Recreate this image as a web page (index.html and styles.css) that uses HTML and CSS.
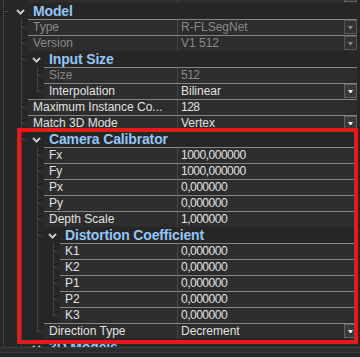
FILE: index.html
```html
<!DOCTYPE html>
<html>
<head>
<meta charset="utf-8">
<link rel="stylesheet" href="styles.css">
</head>
<body>
<div class="panel">
  <div class="list">
    <div class="row prev">
      <span class="g c1 v"></span><span class="g s"></span>
      <div class="cell"><span class="lbl"></span><span class="val"><i class="dd"></i></span></div>
    </div>

    <div class="row head">
      <span class="g c1 t"></span>
      <span class="chev"><svg width="9" height="6" viewBox="0 0 9 6"><polyline points="1,1 4.5,4.5 8,1"/></svg></span>
      <span class="htxt">Model</span>
    </div>
    <div class="row">
      <span class="g c1 v"></span><span class="g s t"></span>
      <div class="cell dis"><span class="lbl">Type</span><span class="val">R-FLSegNet<i class="dd"></i></span></div>
    </div>
    <div class="row">
      <span class="g c1 v"></span><span class="g s t"></span>
      <div class="cell dis"><span class="lbl">Version</span><span class="val">V1 512<i class="dd"></i></span></div>
    </div>

    <div class="row head">
      <span class="g c1 v"></span><span class="g t"></span>
      <span class="chev"><svg width="9" height="6" viewBox="0 0 9 6"><polyline points="1,1 4.5,4.5 8,1"/></svg></span>
      <span class="htxt">Input Size</span>
    </div>
    <div class="row">
      <span class="g c1 v"></span><span class="g v"></span><span class="g s t"></span>
      <div class="cell dis"><span class="lbl">Size</span><span class="val num">512</span></div>
    </div>
    <div class="row">
      <span class="g c1 v"></span><span class="g v"></span><span class="g s l"></span>
      <div class="cell"><span class="lbl">Interpolation</span><span class="val">Bilinear<i class="dd"></i></span></div>
    </div>
    <div class="row">
      <span class="g c1 v"></span><span class="g s t"></span>
      <div class="cell"><span class="lbl">Maximum Instance Co...</span><span class="val num">128</span></div>
    </div>
    <div class="row">
      <span class="g c1 v"></span><span class="g s t"></span>
      <div class="cell"><span class="lbl">Match 3D Mode</span><span class="val">Vertex<i class="dd"></i></span></div>
    </div>

    <div class="row head">
      <span class="g c1 v"></span><span class="g t"></span>
      <span class="chev"><svg width="9" height="6" viewBox="0 0 9 6"><polyline points="1,1 4.5,4.5 8,1"/></svg></span>
      <span class="htxt">Camera Calibrator</span>
    </div>
    <div class="row">
      <span class="g c1 v"></span><span class="g v"></span><span class="g s t"></span>
      <div class="cell"><span class="lbl">Fx</span><span class="val num">1000,000000</span></div>
    </div>
    <div class="row">
      <span class="g c1 v"></span><span class="g v"></span><span class="g s t"></span>
      <div class="cell"><span class="lbl">Fy</span><span class="val num">1000,000000</span></div>
    </div>
    <div class="row">
      <span class="g c1 v"></span><span class="g v"></span><span class="g s t"></span>
      <div class="cell"><span class="lbl">Px</span><span class="val num">0,000000</span></div>
    </div>
    <div class="row">
      <span class="g c1 v"></span><span class="g v"></span><span class="g s t"></span>
      <div class="cell"><span class="lbl">Py</span><span class="val num">0,000000</span></div>
    </div>
    <div class="row">
      <span class="g c1 v"></span><span class="g v"></span><span class="g s t"></span>
      <div class="cell"><span class="lbl">Depth Scale</span><span class="val num">1,000000</span></div>
    </div>

    <div class="row head">
      <span class="g c1 v"></span><span class="g v"></span><span class="g t"></span>
      <span class="chev"><svg width="9" height="6" viewBox="0 0 9 6"><polyline points="1,1 4.5,4.5 8,1"/></svg></span>
      <span class="htxt">Distortion Coefficient</span>
    </div>
    <div class="row">
      <span class="g c1 v"></span><span class="g v"></span><span class="g v"></span><span class="g s t"></span>
      <div class="cell"><span class="lbl">K1</span><span class="val num">0,000000</span></div>
    </div>
    <div class="row">
      <span class="g c1 v"></span><span class="g v"></span><span class="g v"></span><span class="g s t"></span>
      <div class="cell"><span class="lbl">K2</span><span class="val num">0,000000</span></div>
    </div>
    <div class="row">
      <span class="g c1 v"></span><span class="g v"></span><span class="g v"></span><span class="g s t"></span>
      <div class="cell"><span class="lbl">P1</span><span class="val num">0,000000</span></div>
    </div>
    <div class="row">
      <span class="g c1 v"></span><span class="g v"></span><span class="g v"></span><span class="g s t"></span>
      <div class="cell"><span class="lbl">P2</span><span class="val num">0,000000</span></div>
    </div>
    <div class="row">
      <span class="g c1 v"></span><span class="g v"></span><span class="g v"></span><span class="g s l"></span>
      <div class="cell"><span class="lbl">K3</span><span class="val num">0,000000</span></div>
    </div>
    <div class="row">
      <span class="g c1 v"></span><span class="g v"></span><span class="g s l"></span>
      <div class="cell"><span class="lbl">Direction Type</span><span class="val">Decrement<i class="dd"></i></span></div>
    </div>

    <div class="row head">
      <span class="g c1 v"></span><span class="g t"></span>
      <span class="chev"><svg width="9" height="6" viewBox="0 0 9 6"><polyline points="1,1 4.5,4.5 8,1"/></svg></span>
      <span class="htxt">3D Models</span>
    </div>
  </div>
  <div class="foot"><div class="band"></div></div>
  <div class="mark"></div>
</div>
</body>
</html>
```
FILE: styles.css
```css
html, body {
  margin: 0;
  padding: 0;
  background: #262626;
}
body {
  font-family: "Liberation Sans", Arial, sans-serif;
  font-size: 12px;
  color: #e2e2e2;
}
.panel {
  position: relative;
  width: 360px;
  height: 357px;
  overflow: hidden;
}
.list {
  width: 357px;
  height: 347px;
  overflow: hidden;
  display: flex;
  flex-direction: column;
}
.row {
  display: flex;
  height: 16px;
  flex: none;
}
.row.prev {
  margin-top: -13px;
}

/* tree guide columns */
.g {
  --x: 5px;
  --dot: #5e5e5e;
  width: 16px;
  height: 16px;
  flex: none;
  background-repeat: no-repeat;
}
.g.c1 { --x: 3px; }
.g.s { width: 12px; }
.g.v {
  background-image: repeating-linear-gradient(to bottom, var(--dot) 0 1px, transparent 1px 2px);
  background-size: 1px 16px;
  background-position: var(--x) 0;
}
.g.t {
  background-image:
    repeating-linear-gradient(to bottom, var(--dot) 0 1px, transparent 1px 2px),
    repeating-linear-gradient(to right, var(--dot) 0 1px, transparent 1px 2px);
  background-size: 1px 16px, 5px 1px;
  background-position: var(--x) 0, var(--x) 8px;
}
.g.c1.t {
  background-size: 1px 16px, 6px 1px;
}
.g.l {
  background-image:
    repeating-linear-gradient(to bottom, var(--dot) 0 1px, transparent 1px 2px),
    repeating-linear-gradient(to right, var(--dot) 0 1px, transparent 1px 2px);
  background-size: 1px 9px, 5px 1px;
  background-position: var(--x) 0, var(--x) 8px;
}

/* section headers */
.chev {
  width: 16px;
  height: 16px;
  flex: none;
  display: flex;
  align-items: flex-start;
}
.chev svg {
  margin-top: 6px;
  overflow: visible;
}
.chev polyline {
  fill: none;
  stroke: #c4c4c4;
  stroke-width: 2;
}
.htxt {
  padding-left: 1px;
  font-size: 14px;
  font-weight: bold;
  line-height: 16px;
  color: #93c6f6;
  letter-spacing: -0.15px;
  white-space: nowrap;
}

/* property rows */
.cell {
  flex: 1;
  min-width: 0;
  display: flex;
  border-top: 1px solid #858585;
  background: #2d2d2d;
  height: 15px;
}
.lbl {
  flex: 1;
  min-width: 0;
  padding-left: 5px;
  border-right: 1px solid #464646;
  line-height: 15px;
  white-space: nowrap;
  overflow: hidden;
}
.val {
  width: 179px;
  flex: none;
  box-sizing: border-box;
  padding-left: 3px;
  display: flex;
  line-height: 15px;
  white-space: nowrap;
}
.val.num {
  letter-spacing: -0.5px;
}
.cell.dis {
  color: #8a8a8a;
}
.dd {
  margin-left: auto;
  width: 13px;
  height: 14px;
  box-sizing: border-box;
  border: 1px solid #606060;
  background: #3a3a3a;
  display: flex;
  align-items: center;
  justify-content: center;
  color: #ffffff;
}
.cell.dis .dd {
  color: #8c8c8c;
  border-color: #565656;
  background: #333333;
}
.dd::after {
  content: "";
  width: 1px;
  height: 0;
  border-left: 2px solid transparent;
  border-right: 2px solid transparent;
  border-top: 3px solid currentColor;
}

/* bottom panel edge */
.foot {
  height: 10px;
  border-top: 1px solid #3c3c3c;
  background: #262626;
}
.band {
  height: 4px;
  background: #2d2d2d;
  border-bottom: 1px solid #3a3a3a;
}

/* red annotation overlay */
.mark {
  position: absolute;
  left: 17px;
  top: 128px;
  width: 341px;
  height: 216px;
  box-sizing: border-box;
  border: 4px solid #e41a1c;
  pointer-events: none;
}
```
